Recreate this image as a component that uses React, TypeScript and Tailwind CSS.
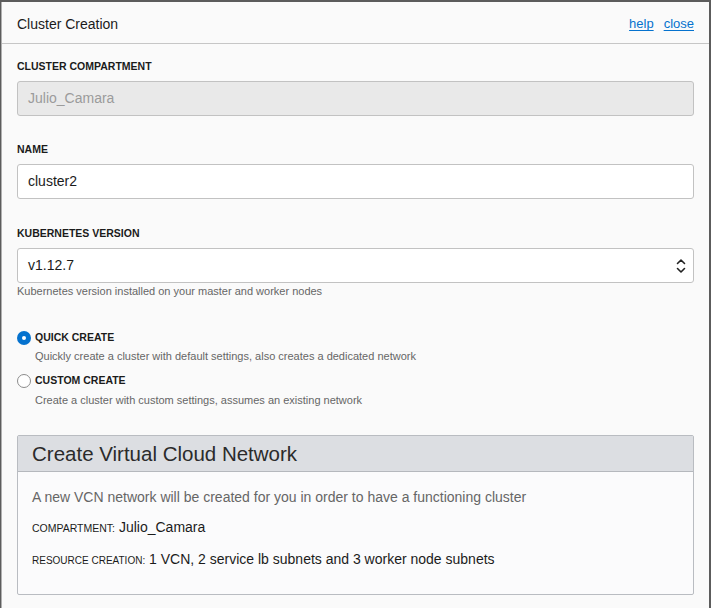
import React from "react";

const font = { fontFamily: '"Liberation Sans", Arial, Helvetica, sans-serif' };

export default function App() {
  return (
    <div className="min-h-screen w-[711px] h-[608px] overflow-hidden bg-[#5c5c5c] pt-[2px] pl-[1px] pr-[2px]" style={font}>
      <div className="h-[606px] bg-[#fafafa] border-l border-[#b0b0b0] text-[#161513]">
        <div className="h-[42px] pt-[3px] flex items-center justify-between pl-[15px] pr-[15px] border-b border-[#c6c6c6]">
          <h1 className="text-[14px] font-medium text-[#1b1b1b]">Cluster Creation</h1>
          <div className="flex gap-[10px] text-[13px] text-[#0572ce]">
            <a className="underline underline-offset-2" href="#">help</a>
            <a className="underline underline-offset-2" href="#">close</a>
          </div>
        </div>

        <div className="px-[15px] pt-[15px]">
          <Label>CLUSTER COMPARTMENT</Label>
          <div className="mt-[8px] h-[35px] rounded-[3px] border border-[#c2c2c2] bg-[#e9e9e9] flex items-center px-[10px] text-[14px] text-[#9b9b9b]">
            Julio_Camara
          </div>

          <div className="mt-[26px]">
            <Label>NAME</Label>
          </div>
          <div className="mt-[8px] h-[35px] rounded-[3px] border border-[#c2c2c2] bg-white flex items-center px-[10px] text-[14px] text-[#1b1b1b]">
            cluster2
          </div>

          <div className="mt-[27px]">
            <Label>KUBERNETES VERSION</Label>
          </div>
          <div className="mt-[8px] h-[35px] rounded-[3px] border border-[#c2c2c2] bg-white flex items-center justify-between pl-[10px] pr-[7px] text-[14px] text-[#1b1b1b]">
            <span>v1.12.7</span>
            <svg width="10" height="16" viewBox="0 0 10 16" fill="none" stroke="#222" strokeWidth="1.6" strokeLinecap="round" strokeLinejoin="round">
              <path d="M1.5 5.5 L5 2 L8.5 5.5" />
              <path d="M1.5 10.5 L5 14 L8.5 10.5" />
            </svg>
          </div>
          <p className="mt-[1px] text-[11px] leading-[14px] text-[#666]">
            Kubernetes version installed on your master and worker nodes
          </p>

          <div className="mt-[33px]">
            <Radio checked label="QUICK CREATE" />
            <p className="mt-[4px] pl-[18px] text-[11px] leading-[14px] text-[#666]">
              Quickly create a cluster with default settings, also creates a dedicated network
            </p>
            <div className="mt-[11px]">
              <Radio label="CUSTOM CREATE" />
            </div>
            <p className="mt-[5px] pl-[18px] text-[11px] leading-[14px] text-[#666]">
              Create a cluster with custom settings, assumes an existing network
            </p>
          </div>

          <div className="mt-[28px] rounded-[2px] border border-[#b9bcc1] bg-[#fbfbfc]">
            <div className="h-[36px] pt-[2px] bg-[#dcdee2] border-b border-[#b5b8bd] flex items-center px-[14px]">
              <h2 className="text-[20.5px] text-[#2b2b2b]">Create Virtual Cloud Network</h2>
            </div>
            <div className="px-[14px] pt-[16px] pb-[24px]">
              <p className="text-[14px] leading-[18px] text-[#666]">
                A new VCN network will be created for you in order to have a functioning cluster
              </p>
              <p className="mt-[12px] text-[14px] leading-[18px] text-[#1b1b1b]">
                <span className="text-[10.5px] font-medium">COMPARTMENT:</span> Julio_Camara
              </p>
              <p className="mt-[13px] text-[14px] leading-[18px] text-[#1b1b1b]">
                <span className="text-[10px] font-medium">RESOURCE CREATION:</span> 1 VCN, 2 service lb subnets and 3 worker node subnets
              </p>
            </div>
          </div>
        </div>
      </div>
    </div>
  );
}

function Label({ children }: { children: React.ReactNode }) {
  return <div className="text-[10.5px] leading-[14px] font-bold text-[#1b1b1b]">{children}</div>;
}

function Radio({ label, checked }: { label: string; checked?: boolean }) {
  return (
    <div className="flex items-center gap-[4px] h-[14px]">
      {checked ? (
        <span className="w-[14px] h-[14px] rounded-full bg-[#0572ce] flex items-center justify-center">
          <span className="w-[4px] h-[4px] rounded-full bg-white" />
        </span>
      ) : (
        <span className="w-[14px] h-[14px] rounded-full border border-[#8c8c8c] bg-white" />
      )}
      <span className="text-[10.5px] font-bold text-[#1b1b1b]">{label}</span>
    </div>
  );
}
